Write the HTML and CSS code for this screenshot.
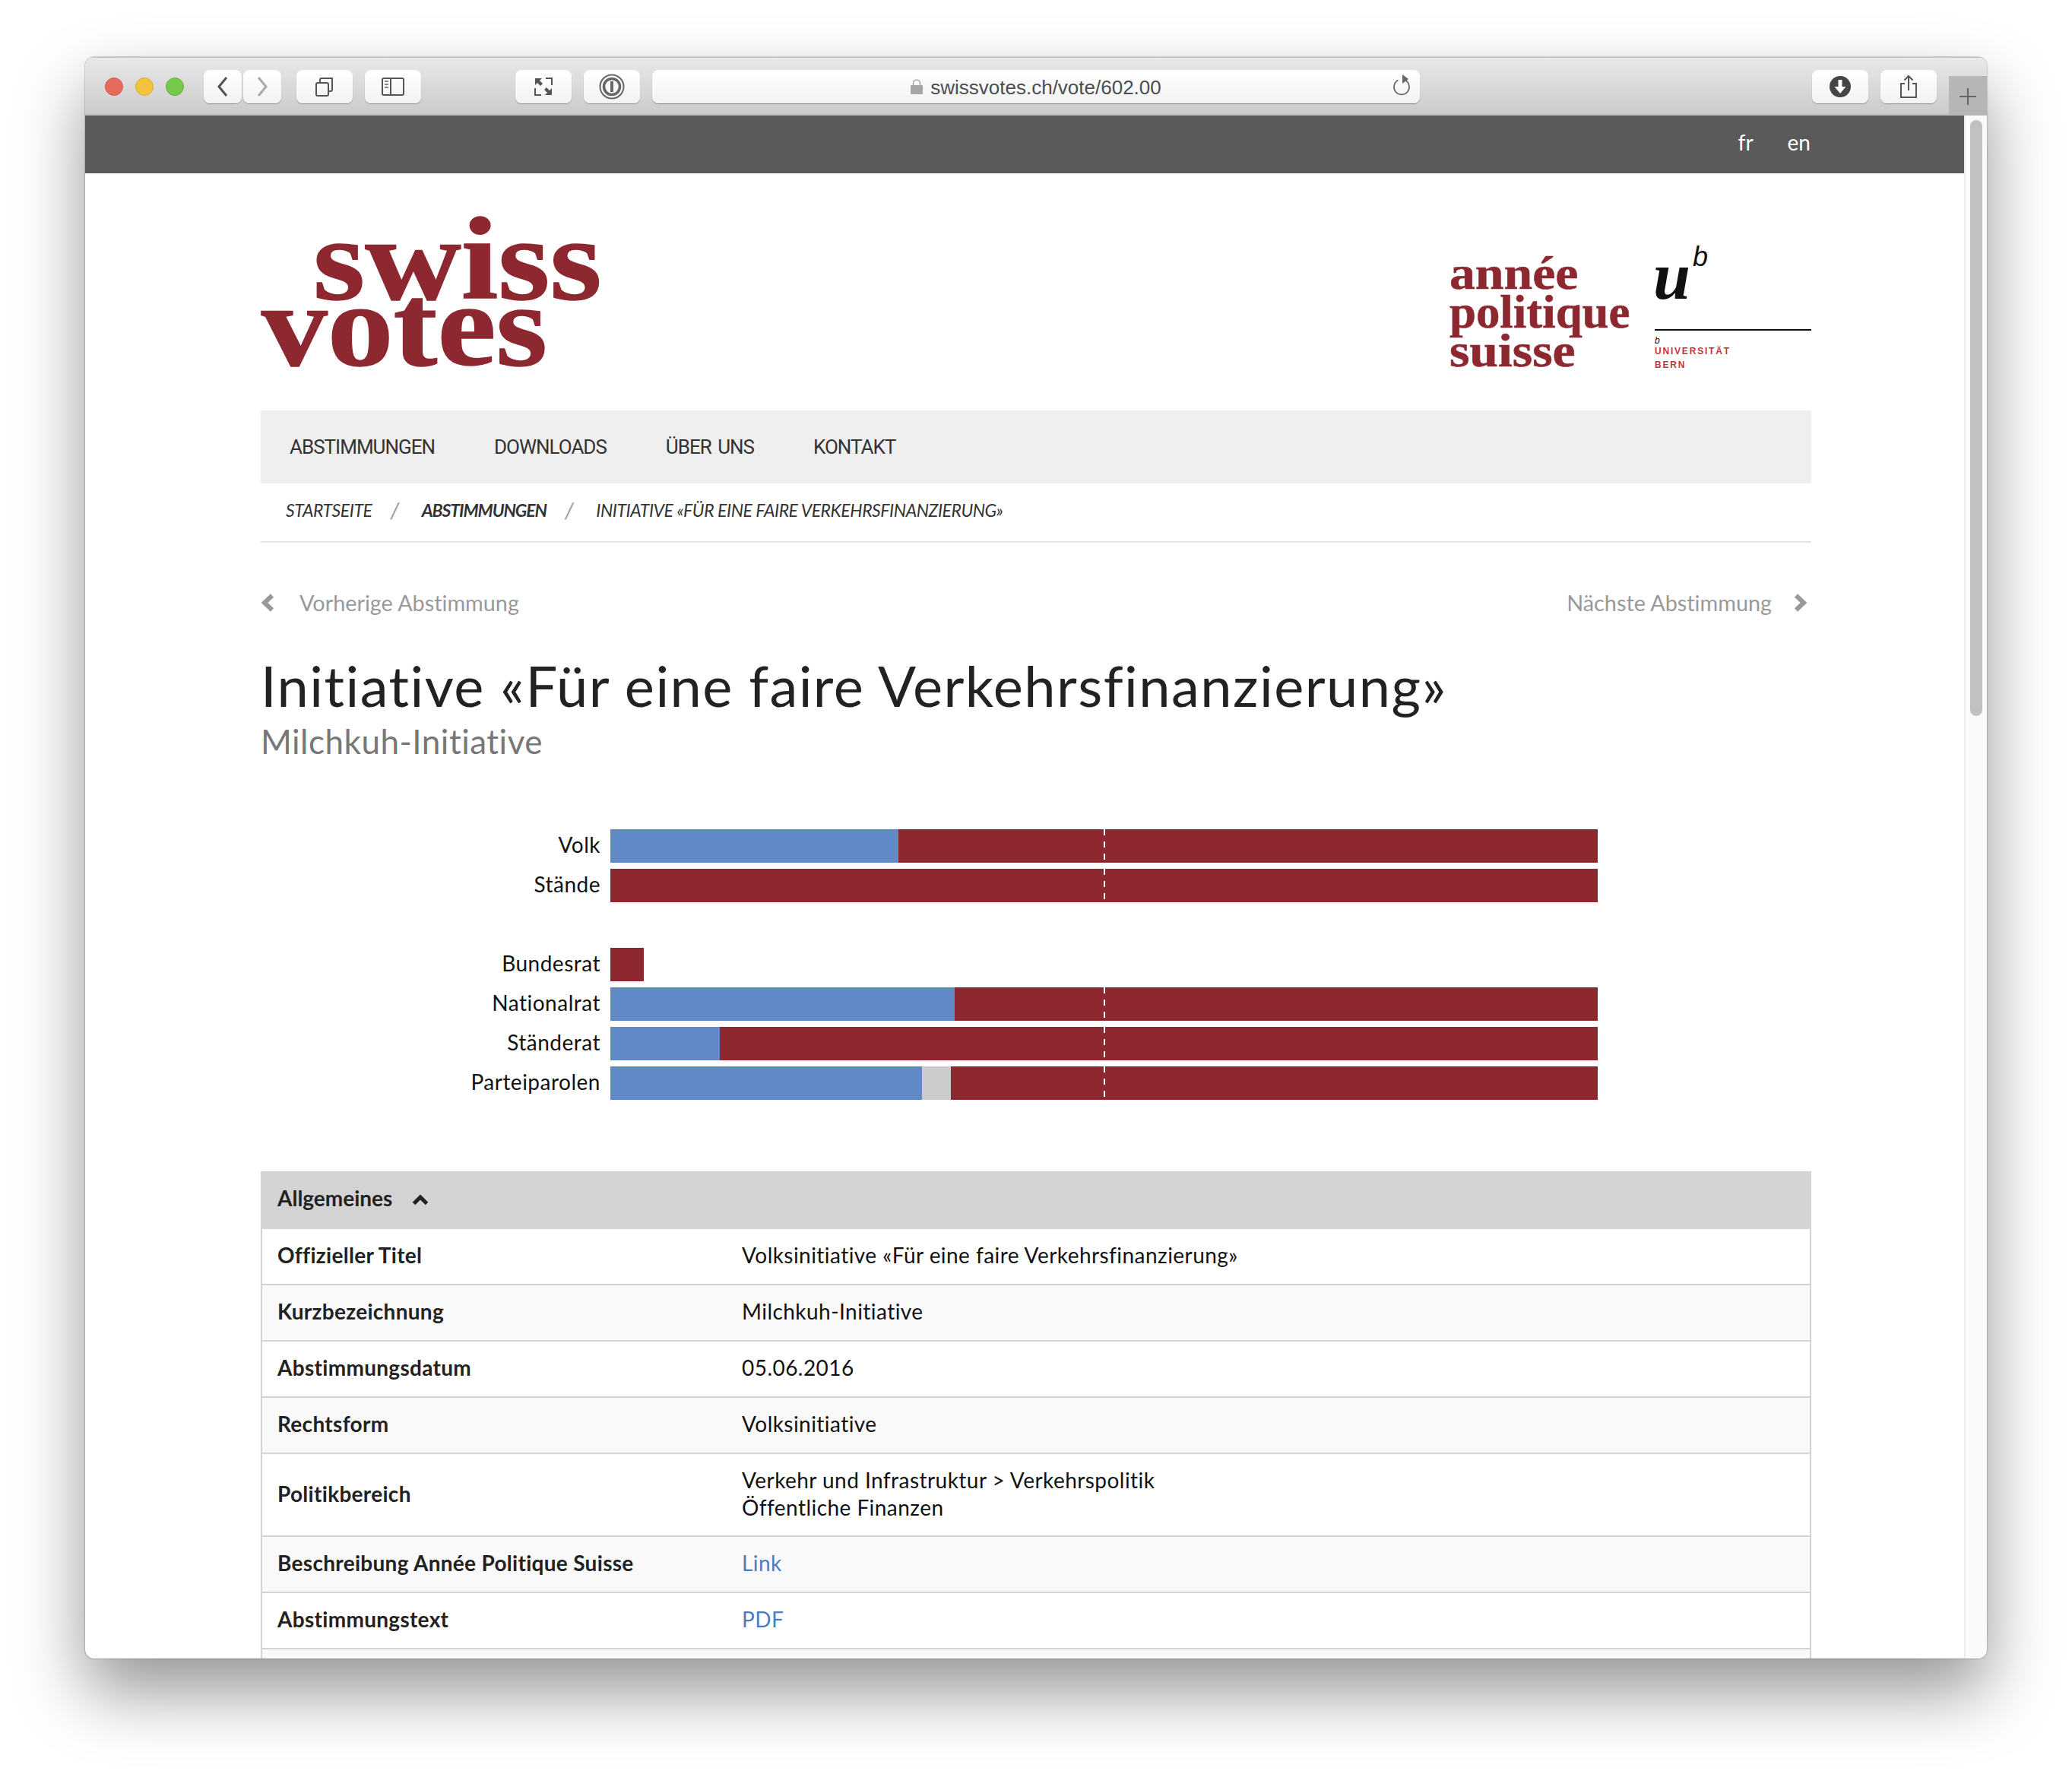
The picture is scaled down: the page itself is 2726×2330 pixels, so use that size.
FILE: index.html
```html
<!DOCTYPE html>
<html lang="de">
<head>
    <meta charset="UTF-8" />
    <title>swissvotes.ch/vote/602.00</title>
    <link rel="stylesheet" href="styles.css">
</head>

<body>
    <div class="window">
        <!-- Browser toolbar -->
        <div class="toolbar">
            <div class="lights">
                <span class="light red"></span>
                <span class="light yellow"></span>
                <span class="light green"></span>
            </div>
            <div class="btn nav-back">
                <svg width="16" height="26" viewBox="0 0 16 26"><polyline points="13,1 3,13 13,25" fill="none" stroke="#555" stroke-width="3"/></svg>
            </div>
            <div class="btn nav-forward">
                <svg width="16" height="26" viewBox="0 0 16 26"><polyline points="3,1 13,13 3,25" fill="none" stroke="#aaa" stroke-width="3"/></svg>
            </div>
            <div class="btn btn-tabs">
                <svg width="26" height="26" viewBox="0 0 26 26" fill="none" stroke="#555" stroke-width="2"><rect x="2" y="8" width="16" height="17" rx="2"/><path d="M7 8V4a2 2 0 0 1 2-2h13a2 2 0 0 1 1 0v15a2 2 0 0 1-2 2h-3"/></svg>
            </div>
            <div class="btn btn-sidebar">
                <svg width="30" height="24" viewBox="0 0 30 24"><rect x="1" y="1" width="28" height="22" rx="2" fill="none" stroke="#555" stroke-width="2"/><path d="M12 1v22" stroke="#555" stroke-width="2"/><path d="M4 5h5M4 9h5M4 13h5" stroke="#888" stroke-width="2"/></svg>
            </div>
            <div class="btn btn-reader">
                <svg width="26" height="26" viewBox="0 0 26 26"><path d="M2 2h9l-3 3 4 4-3 3-4-4-3 3z" fill="#555"/><path d="M16 2h8v9M2 15v9h8" stroke="#555" stroke-width="2" fill="none"/><path d="M24 24h-9l3-3-4-4 3-3 4 4 3-3z" fill="#555"/></svg>
            </div>
            <div class="btn btn-pass">
                <svg width="34" height="34" viewBox="0 0 34 34" fill="none" stroke="#666"><circle cx="17" cy="17" r="15.5" stroke-width="2"/><circle cx="17" cy="17" r="10.5" stroke-width="3.5"/><path d="M17 10v14" stroke-width="4"/></svg>
            </div>
            <div class="address">
                <svg class="lock" width="16" height="20" viewBox="0 0 16 20"><path d="M3.5 9V5.5a4.5 4.5 0 0 1 9 0V9" fill="none" stroke="#a6a6a6" stroke-width="1.5"/><rect y="8" width="16" height="12" rx="1" fill="#a6a6a6"/></svg>
                <span class="url">swissvotes.ch/vote/602.00</span>
                <svg class="reload" width="24" height="28" viewBox="0 0 24 28"><path d="M7.500 7.500a10 10 0 1 0 9 0" fill="none" stroke="#666" stroke-width="1.8"/><path d="M13 0l8 6-8 6z" fill="#666"/></svg>
            </div>
            <div class="btn btn-download">
                <svg width="28" height="28" viewBox="0 0 28 28"><circle cx="14" cy="14" r="14" fill="#454545"/><path d="M11.500 5h5v9h5L14 23 6.500 14h5z" fill="#fff"/></svg>
            </div>
            <div class="btn btn-share">
                <svg width="24" height="32" viewBox="0 0 24 32" fill="none" stroke="#555" stroke-width="2"><path d="M7 12H2v18h20V12h-5"/><path d="M12 21V2M6.500 7.500L12 2l5.500 5.500"/></svg>
            </div>
            <div class="new-tab">
                <svg width="24" height="24" viewBox="0 0 24 24"><path d="M12 1v22M1 12h22" stroke="#666" stroke-width="2"/></svg>
            </div>
        </div>

        <div class="viewport">
            <div class="page">
                <div class="lang-bar">
                    <span>fr</span>
                    <span>en</span>
                </div>

                <div class="content">
                    <!-- Logos -->
                    <div class="logos">
                        <div class="logo-main">
                            <span class="logo-swiss">swiss</span>
                            <span class="logo-votes">votes</span>
                        </div>
                        <div class="logo-side">
                            <div class="logo-aps">
                                <span class="aps-short">année</span>
                                <span class="aps-long">politique</span>
                                <span class="aps-short">suisse</span>
                            </div>
                            <div class="logo-bern">
                                <div class="bern-mark"><span class="bern-u">u</span><span class="bern-b">b</span></div>
                                <div class="bern-small">b</div>
                                <div class="bern-name">UNIVERSITÄT<br>BERN</div>
                            </div>
                        </div>
                    </div>

                    <!-- Main nav -->
                    <div class="main-nav">
                        <a>ABSTIMMUNGEN</a>
                        <a>DOWNLOADS</a>
                        <a>ÜBER UNS</a>
                        <a>KONTAKT</a>
                    </div>

                    <div class="crumbs">
                        <span>STARTSEITE</span>
                        <span class="slash">/</span>
                        <b>ABSTIMMUNGEN</b>
                        <span class="slash">/</span>
                        <span>INITIATIVE «FÜR EINE FAIRE VERKEHRSFINANZIERUNG»</span>
                    </div>

                    <div class="pager">
                        <a class="pager-prev">
                            <svg width="18" height="24" viewBox="0 0 18 24"><polyline points="15,2.500 5,12 15,21.500" fill="none" stroke="#999" stroke-width="6"/></svg>
                            Vorherige Abstimmung
                        </a>
                        <a class="pager-next">
                            Nächste Abstimmung
                            <svg width="18" height="24" viewBox="0 0 18 24"><polyline points="3,2.500 13,12 3,21.500" fill="none" stroke="#999" stroke-width="6"/></svg>
                        </a>
                    </div>

                    <h1>Initiative «Für eine faire Verkehrsfinanzierung»</h1>
                    <h2>Milchkuh-Initiative</h2>

                    <!-- Result bars -->
                    <div class="chart">
                        <div class="bar-group">
                            <div class="bar-row">
                                <span class="bar-label">Volk</span>
                                <div class="bar half">
                                    <div class="yes" style="width: 379px"></div>
                                    <div class="no"></div>
                                </div>
                            </div>
                            <div class="bar-row">
                                <span class="bar-label">Stände</span>
                                <div class="bar half">
                                    <div class="no"></div>
                                </div>
                            </div>
                        </div>
                        <div class="bar-group">
                            <div class="bar-row">
                                <span class="bar-label">Bundesrat</span>
                                <div class="bar">
                                    <div class="no" style="flex: none; width: 44px"></div>
                                </div>
                            </div>
                            <div class="bar-row">
                                <span class="bar-label">Nationalrat</span>
                                <div class="bar half">
                                    <div class="yes" style="width: 453px"></div>
                                    <div class="no"></div>
                                </div>
                            </div>
                            <div class="bar-row">
                                <span class="bar-label">Ständerat</span>
                                <div class="bar half">
                                    <div class="yes" style="width: 144px"></div>
                                    <div class="no"></div>
                                </div>
                            </div>
                            <div class="bar-row">
                                <span class="bar-label">Parteiparolen</span>
                                <div class="bar half">
                                    <div class="yes" style="width: 410px"></div>
                                    <div class="neutral" style="width: 38px"></div>
                                    <div class="no"></div>
                                </div>
                            </div>
                        </div>
                    </div>

                    <!-- Details table -->
                    <div class="section-head">
                        <span>Allgemeines</span>
                        <svg width="22" height="16" viewBox="0 0 22 16"><polyline points="2.500,13.500 11,5 19.500,13.500" fill="none" stroke="#222" stroke-width="5"/></svg>
                    </div>
                    <table class="details">
                        <tr>
                            <th>Offizieller Titel</th>
                            <td>Volksinitiative «Für eine faire Verkehrsfinanzierung»</td>
                        </tr>
                        <tr>
                            <th>Kurzbezeichnung</th>
                            <td>Milchkuh-Initiative</td>
                        </tr>
                        <tr>
                            <th>Abstimmungsdatum</th>
                            <td>05.06.2016</td>
                        </tr>
                        <tr>
                            <th>Rechtsform</th>
                            <td>Volksinitiative</td>
                        </tr>
                        <tr class="tall">
                            <th>Politikbereich</th>
                            <td>Verkehr und Infrastruktur &gt; Verkehrspolitik<br>Öffentliche Finanzen</td>
                        </tr>
                        <tr>
                            <th>Beschreibung Année Politique Suisse</th>
                            <td><a>Link</a></td>
                        </tr>
                        <tr>
                            <th>Abstimmungstext</th>
                            <td><a>PDF</a></td>
                        </tr>
                        <tr>
                            <th>&nbsp;</th>
                            <td>&nbsp;</td>
                        </tr>
                    </table>
                </div>
            </div>

            <div class="scrollbar">
                <div class="thumb"></div>
            </div>
        </div>
    </div>
</body>
</html>
```

FILE: styles.css
```css
/* Basic reset and background */
html, body {
    margin: 0;
    padding: 0;
    background: #fff;
    overflow: hidden;
}

body {
    width: 2726px;
    height: 2330px;
    font-family: Lato, "Noto Sans", sans-serif;
    font-variant-ligatures: none;
    color: #111;
}

/* Browser window */
.window {
    width: 2502px;
    height: 2107px;
    margin: 75px 0 0 112px;
    border-radius: 12px;
    overflow: hidden;
    display: flex;
    flex-direction: column;
    background: #fff;
    box-shadow: 0 44px 90px rgba(0, 0, 0, 0.42), 0 0 2px rgba(0, 0, 0, 0.55);
}

/* Toolbar */
.toolbar {
    flex: none;
    height: 77px;
    box-sizing: border-box;
    padding: 16px 0 0 26px;
    display: flex;
    align-items: flex-start;
    gap: 16px;
    background: linear-gradient(#e8e8e8, #cbcbcb);
    border-top: 1px solid #c4c4c4;
    border-bottom: 2px solid #bdbdbd;
}

.lights {
    display: flex;
    gap: 16px;
    margin: 10px 10px 0 0;
}

.light {
    width: 24px;
    height: 24px;
    border-radius: 50%;
    box-sizing: border-box;
}

.red { background: #e5695c; border: 1px solid #d2584c; }
.yellow { background: #f3c33e; border: 1px solid #dba92f; }
.green { background: #74c84a; border: 1px solid #62b03c; }

.btn {
    width: 74px;
    height: 44px;
    box-sizing: border-box;
    border-radius: 8px;
    background: linear-gradient(#fff, #f2f2f2);
    box-shadow: 0 1px 1px rgba(0, 0, 0, 0.3);
    display: flex;
    align-items: center;
    justify-content: center;
}

.nav-back, .nav-forward { width: 50px; }
.nav-forward { margin-left: -14px; }
.btn-reader { margin-left: 108px; }
.btn-tabs { margin-left: 4px; }

.address {
    position: relative;
    width: 1010px;
    height: 44px;
    border-radius: 8px;
    background: linear-gradient(#fff, #f2f2f2);
    box-shadow: 0 1px 1px rgba(0, 0, 0, 0.35);
    display: flex;
    align-items: center;
    justify-content: center;
    gap: 10px;
}

.url {
    margin-top: 2px;
    font-family: "Liberation Sans", sans-serif;
    font-size: 26px;
    color: #4d4d4d;
}

.reload {
    position: absolute;
    right: 12px;
    top: 6px;
}

.btn-download { margin-left: auto; }

.new-tab {
    width: 50px;
    height: 51px;
    box-sizing: border-box;
    margin-top: 8px;
    padding-top: 3px;
    background: #b6b6b6;
    display: flex;
    align-items: center;
    justify-content: center;
}

/* Area under the toolbar */
.viewport {
    flex: 1;
    min-height: 0;
    display: flex;
}

.page {
    flex: 1;
    min-width: 0;
    overflow: hidden;
}

.scrollbar {
    flex: none;
    width: 30px;
    box-sizing: border-box;
    padding: 6px 6px 0 6px;
    background: #fafafa;
    border-left: 2px solid #ededed;
}

.thumb {
    height: 784px;
    border-radius: 8px;
    background: #c1c1c1;
}

/* Language bar */
.lang-bar {
    height: 76px;
    box-sizing: border-box;
    padding: 0 202px 6px 0;
    display: flex;
    align-items: center;
    justify-content: flex-end;
    gap: 45px;
    background: #5a5a5a;
    color: #fff;
    font-size: 28px;
}

.content {
    padding: 0 201px 0 231px;
}

/* Logos */
.logos {
    height: 312px;
    display: flex;
    justify-content: space-between;
    color: #8d2830;
    font-family: "Liberation Serif", serif;
    font-weight: bold;
}

.logo-main {
    padding-top: 70px;
}

.logo-swiss, .logo-votes {
    display: block;
    font-size: 155px;
    line-height: 87px;
    -webkit-text-stroke: 1.5px #8d2830;
    transform-origin: left;
    transform: scaleX(1.13);
}

.logo-swiss { margin-left: 69px; }
.logo-votes { margin-left: 1px; transform: scaleX(1.12); }

.logo-side {
    display: flex;
    padding-top: 106px;
    gap: 34px;
}

.logo-aps {
    width: 236px;
}

.logo-aps span {
    display: block;
    font-size: 61px;
    line-height: 51px;
    -webkit-text-stroke: 0.6px #8d2830;
    transform-origin: left;
}

.aps-short { transform: scaleX(1.11); }
.aps-long { transform: scaleX(1.03); }

.logo-bern {
    width: 206px;
    color: #111;
}

.bern-mark {
    height: 109px;
    margin-top: -10px;
    display: flex;
    align-items: flex-start;
    border-bottom: 2px solid #111;
}

.bern-u {
    margin-left: -2px;
    font-style: italic;
    font-size: 88px;
    line-height: 79px;
}

.bern-b {
    margin-left: 3px;
    font-family: "Liberation Sans", sans-serif;
    font-style: italic;
    font-weight: normal;
    font-size: 36px;
    line-height: 27px;
}

.bern-small {
    margin-top: 6px;
    font-family: "Liberation Sans", sans-serif;
    font-style: italic;
    font-weight: normal;
    font-size: 12px;
    line-height: 14px;
}

.bern-name {
    margin-top: -1px;
    font-family: "Liberation Sans", sans-serif;
    font-size: 12px;
    line-height: 17.5px;
    letter-spacing: 1.8px;
    color: #c8323f;
}

/* Main nav */
.main-nav {
    height: 96px;
    padding-left: 38px;
    display: flex;
    align-items: center;
    gap: 78px;
    background: #efefef;
    font-family: Roboto, sans-serif;
    font-size: 26px;
    letter-spacing: -1px;
    word-spacing: 3px;
    color: #333;
}

/* Breadcrumb */
.crumbs {
    height: 76px;
    padding: 0 0 0 33px;
    display: flex;
    align-items: center;
    gap: 24px;
    border-bottom: 2px solid #e5e5e5;
    font-size: 23px;
    font-style: italic;
    letter-spacing: -0.45px;
    color: #333;
}

.crumbs span, .crumbs b {
    position: relative;
    top: -3px;
}

.crumbs b {
    letter-spacing: -1.1px;
}

.crumbs .slash {
    margin-right: 6px;
    color: #999;
    font-size: 28px;
}

/* Previous / next */
.pager {
    margin-top: 62px;
    display: flex;
    justify-content: space-between;
    font-size: 28.800px;
    color: #999;
}

.pager a {
    display: flex;
    align-items: center;
}

.pager-prev { gap: 33px; }

.pager-next {
    gap: 29px;
    margin-right: 5px;
}

/* Headings */
h1 {
    margin: 50px 0 0;
    font-size: 74px;
    font-weight: normal;
    line-height: 84px;
    letter-spacing: 1.45px;
    color: #222;
}

h2 {
    margin: 4px 0 0;
    font-size: 44px;
    font-weight: normal;
    line-height: 54px;
    letter-spacing: 0.5px;
    color: #777;
}

/* Bars */
.chart {
    margin-top: 89px;
    display: flex;
    flex-direction: column;
    gap: 60px;
}

.bar-group {
    display: flex;
    flex-direction: column;
    gap: 8px;
}

.bar-row {
    display: flex;
    align-items: center;
    gap: 13px;
}

.bar-label {
    width: 447px;
    padding-bottom: 4px;
    text-align: right;
    font-size: 28px;
    letter-spacing: 0.5px;
}

.bar {
    position: relative;
    width: 1299px;
    height: 44px;
    display: flex;
}

.bar.half::after {
    content: "";
    position: absolute;
    left: 649px;
    top: 0;
    bottom: 0;
    width: 2px;
    background: repeating-linear-gradient(#fff 0 8px, transparent 8px 16px);
}

.yes { background: #6089c7; }
.no { flex: 1; background: #8d2830; }
.neutral { background: #cbcbcb; }

/* Section header */
.section-head {
    margin-top: 94px;
    height: 76px;
    box-sizing: border-box;
    padding: 0 0 6px 22px;
    display: flex;
    align-items: center;
    gap: 24px;
    background: #d3d3d3;
    font-size: 28px;
    font-weight: bold;
    color: #222;
}

.section-head svg {
    margin: 4px 0 0 2px;
}

/* Details table */
.details {
    width: 100%;
    border-collapse: separate;
    border-spacing: 0;
    table-layout: fixed;
    border-left: 2px solid #d3d3d3;
    border-right: 2px solid #d3d3d3;
    box-sizing: border-box;
    font-size: 28px;
    line-height: 36px;
    letter-spacing: 0.45px;
}

.details th, .details td {
    padding: 16px 20px 20px;
    border-bottom: 2px solid #d3d3d3;
    text-align: left;
    vertical-align: middle;
}

.details th {
    width: 571px;
    font-weight: bold;
    letter-spacing: 0.3px;
    color: #222;
}

.details tr:nth-child(even) {
    background: #f9f9f9;
}

.details tr.tall th, .details tr.tall td {
    padding-top: 16px;
    padding-bottom: 19px;
}

.details a {
    color: #4f7cc0;
}
```
